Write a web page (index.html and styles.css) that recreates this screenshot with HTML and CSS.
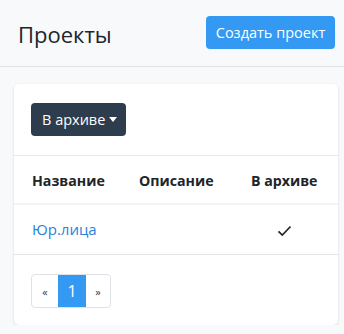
FILE: index.html
```html
<!DOCTYPE html>
<html lang="ru">
<head>
<meta charset="utf-8">
<link rel="stylesheet" href="styles.css">
</head>
<body>
<header class="topbar">
  <h1 class="title">Проекты</h1>
  <button class="btn btn-primary">Создать проект</button>
</header>
<main class="content">
  <section class="card">
    <div class="card-body">
      <button class="btn btn-dark">В архиве<span class="caret"></span></button>
    </div>
    <table class="table">
      <colgroup>
        <col class="c1"><col class="c2"><col class="c3">
      </colgroup>
      <thead>
        <tr><th>Название</th><th>Описание</th><th class="center">В архиве</th></tr>
      </thead>
      <tbody>
        <tr>
          <td><a class="link" href="#">Юр.лица</a></td>
          <td></td>
          <td class="center"><svg class="check" width="15" height="12" viewBox="0 0 15 12"><path d="M1.5 6.3 L5.3 10 L13.5 1.5" fill="none" stroke="#212529" stroke-width="1.7"/></svg></td>
        </tr>
      </tbody>
    </table>
    <div class="card-foot">
      <nav class="pagination">
        <span class="page prev">«</span>
        <span class="page active">1</span>
        <span class="page next">»</span>
      </nav>
    </div>
  </section>
</main>
</body>
</html>
```
FILE: styles.css
```css
* { box-sizing: border-box; }
body {
  margin: 0;
  background: #f8f9fb;
  font-family: "Open Sans", "Noto Sans", sans-serif;
  color: #212529;
}
.topbar {
  height: 67px;
  border-bottom: 1px solid #dfe2e6;
  display: flex;
  align-items: center;
  justify-content: space-between;
  padding: 0 9px 2px 18px;
}
.title {
  margin: 3px 0 0;
  font-size: 22px;
  font-weight: 400;
  color: #212529;
}
.btn {
  border: 0;
  border-radius: 4px;
  font-family: inherit;
  font-size: 14.5px;
  color: #fff;
  height: 33px;
  padding: 0;
  display: inline-flex;
  align-items: center;
  white-space: nowrap;
}
.btn-primary { background: #3399f3; width: 129px; justify-content: center; }
.btn-dark { background: #2e3d4d; width: 95px; padding: 0 0 0 11px; }
.caret {
  display: inline-block;
  margin-left: 4px;
  border-top: 5px solid #fff;
  border-left: 4px solid transparent;
  border-right: 4px solid transparent;
}
.content { padding: 17px 6px 0 14px; }
.card {
  background: #fff;
  border-radius: 5px;
  box-shadow: 0 1px 3px rgba(0,0,0,0.12);
}
.card-body { padding: 19px 17px; border-bottom: 1px solid #e6e9ec; }
.table { width: 100%; border-collapse: collapse; table-layout: fixed; }
.c1 { width: 107px; }
.c2 { width: 112px; }
.c3 { width: 105px; }
.table th {
  height: 48px;
  text-align: left;
  font-weight: 700;
  font-size: 14.2px;
  padding: 2px 0 0 18px;
  white-space: nowrap;
  border-bottom: 2px solid #f1f3f5;
}
.table th.center, .table td.center { text-align: center; padding-right: 21px; }
.table td {
  height: 50px;
  padding: 0 0 0 18px;
  font-size: 15px;
  white-space: nowrap;
  border-bottom: 1px solid #e2e5e8;
}
.link { color: #2782dc; text-decoration: none; }
.check { display: inline-block; vertical-align: middle; }
.card-foot { padding: 19px 17px 17px; }
.pagination {
  display: inline-flex;
  border: 1px solid #dee2e6;
  border-radius: 4px;
  height: 34px;
  overflow: hidden;
}
.page {
  display: flex;
  align-items: center;
  justify-content: center;
  font-size: 11px;
  color: #343a40;
  padding-top: 2px;
}
.prev { width: 26px; }
.active { width: 28px; background: #3399f3; color: #fff; font-size: 16px; padding-top: 0; }
.next { width: 24px; }
```
